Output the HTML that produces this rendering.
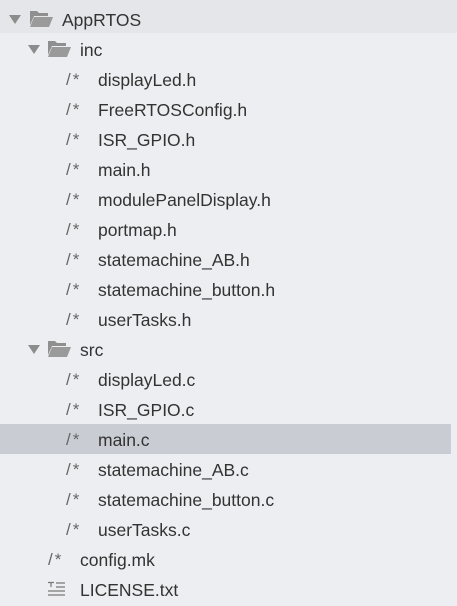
<!DOCTYPE html>
<html><head><style>
body{margin:0;width:457px;height:599px;background:#eceef1;font-family:"Liberation Sans",sans-serif;font-size:17.5px;color:#333;overflow:hidden;position:relative}
.r{position:absolute;left:0;width:451px;height:30px;line-height:32px;white-space:nowrap}
.r span{position:absolute}
.c{color:#666;font-size:17px;letter-spacing:2px}
.sel{background:#c9ccd2;line-height:30px}
.top{background:#e4e6e9;height:33px;top:0;width:457px}
svg{position:absolute}
</style></head><body>
<div class="r top"></div>
<div class="r sel" style="top:424px"></div>
<svg style="left:9px;top:15px" width="12" height="10"><path d="M0 0H12L6 9Z" fill="#8c8c8c"/></svg>
<svg style="left:29px;top:10px" width="25" height="18"><path d="M1 1H8L10 3H19V6H5L1 15Z" fill="#8f8f8f"/><path d="M5 7H24L20 17H1Z" fill="#9a9a9a"/></svg>
<div class="r" style="top:4px"><span style="left:62px">AppRTOS</span></div>
<svg style="left:28px;top:45px" width="12" height="10"><path d="M0 0H12L6 9Z" fill="#8c8c8c"/></svg>
<svg style="left:47px;top:40px" width="25" height="18"><path d="M1 1H8L10 3H19V6H5L1 15Z" fill="#8f8f8f"/><path d="M5 7H24L20 17H1Z" fill="#9a9a9a"/></svg>
<div class="r" style="top:34px"><span style="left:80px">inc</span></div>
<div class="r" style="top:64px"><span class="c" style="left:66px">/*</span><span style="left:98px">displayLed.h</span></div>
<div class="r" style="top:94px"><span class="c" style="left:66px">/*</span><span style="left:98px">FreeRTOSConfig.h</span></div>
<div class="r" style="top:124px"><span class="c" style="left:66px">/*</span><span style="left:98px">ISR_GPIO.h</span></div>
<div class="r" style="top:154px"><span class="c" style="left:66px">/*</span><span style="left:98px">main.h</span></div>
<div class="r" style="top:184px"><span class="c" style="left:66px">/*</span><span style="left:98px">modulePanelDisplay.h</span></div>
<div class="r" style="top:214px"><span class="c" style="left:66px">/*</span><span style="left:98px">portmap.h</span></div>
<div class="r" style="top:244px"><span class="c" style="left:66px">/*</span><span style="left:98px">statemachine_AB.h</span></div>
<div class="r" style="top:274px"><span class="c" style="left:66px">/*</span><span style="left:98px">statemachine_button.h</span></div>
<div class="r" style="top:304px"><span class="c" style="left:66px">/*</span><span style="left:98px">userTasks.h</span></div>
<svg style="left:28px;top:345px" width="12" height="10"><path d="M0 0H12L6 9Z" fill="#8c8c8c"/></svg>
<svg style="left:47px;top:340px" width="25" height="18"><path d="M1 1H8L10 3H19V6H5L1 15Z" fill="#8f8f8f"/><path d="M5 7H24L20 17H1Z" fill="#9a9a9a"/></svg>
<div class="r" style="top:334px"><span style="left:80px">src</span></div>
<div class="r" style="top:364px"><span class="c" style="left:66px">/*</span><span style="left:98px">displayLed.c</span></div>
<div class="r" style="top:394px"><span class="c" style="left:66px">/*</span><span style="left:98px">ISR_GPIO.c</span></div>
<div class="r" style="top:424px"><span class="c" style="left:66px">/*</span><span style="left:98px">main.c</span></div>
<div class="r" style="top:454px"><span class="c" style="left:66px">/*</span><span style="left:98px">statemachine_AB.c</span></div>
<div class="r" style="top:484px"><span class="c" style="left:66px">/*</span><span style="left:98px">statemachine_button.c</span></div>
<div class="r" style="top:514px"><span class="c" style="left:66px">/*</span><span style="left:98px">userTasks.c</span></div>
<div class="r" style="top:544px"><span class="c" style="left:48px">/*</span><span style="left:80px">config.mk</span></div>
<svg style="left:47px;top:581px" width="20" height="16"><path d="M1 1.5H7M4 1.5V6M9 2H18M9 6H18M1 10H18M1 14H18" stroke="#777" stroke-width="1.2" fill="none"/></svg>
<div class="r" style="top:574px"><span style="left:80px">LICENSE.txt</span></div>
</body></html>
